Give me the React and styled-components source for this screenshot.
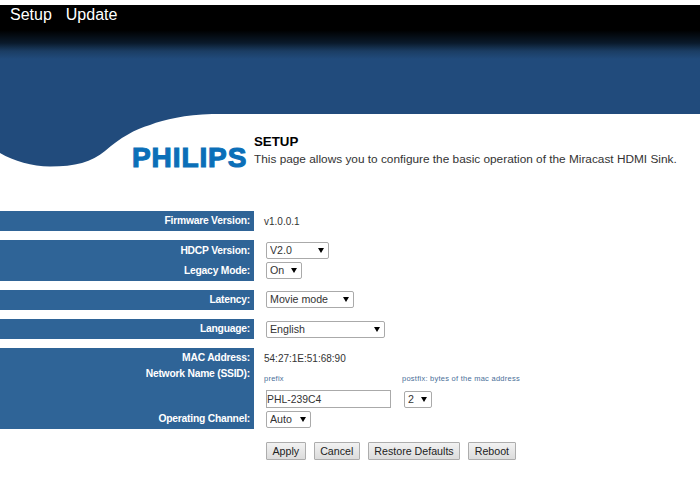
import React from 'react';
import styled, { createGlobalStyle } from 'styled-components';

const GlobalStyle = createGlobalStyle`
  html, body {
    margin: 0;
    padding: 0;
    background: #fff;
    font-family: "Liberation Sans", Arial, sans-serif;
  }
`;

const Dropdown = ({ width, value, options }) => (
  <SelectWrap $width={width}>
    <StSelect defaultValue={value}>
      {options.map((opt) => (
        <option key={opt}>{opt}</option>
      ))}
    </StSelect>
  </SelectWrap>
);

const App = () => {
  return (
    <Page>
      <GlobalStyle />
      <Banner>
        <NavLink>Setup</NavLink>
        <NavLink>Update</NavLink>
      </Banner>

      <Intro>
        <Wave viewBox="0 0 254 53" width="254" height="53">
          <path
            d="M0 0V39C14 47 32 52.5 50 52.5C75 52.5 92 48 105 37C120 24 135 15 150 11C165 5 185 1 212 0Z"
            fill="#214b7c"
          />
        </Wave>
        <Logo>PHILIPS</Logo>
        <IntroText>
          <Title>SETUP</Title>
          <Desc>This page allows you to configure the basic operation of the Miracast HDMI Sink.</Desc>
        </IntroText>
      </Intro>

      <Form>
        <Group>
          <Row $h={20}>
            <Label>Firmware Version:</Label>
            <Value>v1.0.0.1</Value>
          </Row>
        </Group>

        <Group>
          <Row $h={21}>
            <Label>HDCP Version:</Label>
            <Value $pad={2}>
              <Dropdown width={63} value="V2.0" options={['V2.0', 'V1.4']} />
            </Value>
          </Row>
          <Row $h={20}>
            <Label>Legacy Mode:</Label>
            <Value $pad={1}>
              <Dropdown width={36} value="On" options={['On', 'Off']} />
            </Value>
          </Row>
        </Group>

        <Group>
          <Row $h={20}>
            <Label>Latency:</Label>
            <Value $pad={1}>
              <Dropdown width={88} value="Movie mode" options={['Movie mode', 'Game mode']} />
            </Value>
          </Row>
        </Group>

        <Group>
          <Row $h={20}>
            <Label>Language:</Label>
            <Value $pad={2}>
              <Dropdown width={119} value="English" options={['English']} />
            </Value>
          </Row>
        </Group>

        <Group>
          <Row $h={20}>
            <Label>MAC Address:</Label>
            <Value>54:27:1E:51:68:90</Value>
          </Row>
          <SsidRow>
            <Label $top>Network Name (SSID):</Label>
            <SsidGrid>
              <Hint>prefix</Hint>
              <Hint>postfix: bytes of the mac address</Hint>
              <TextInput defaultValue="PHL-239C4" />
              <Dropdown width={28} value="2" options={['2', '3']} />
            </SsidGrid>
          </SsidRow>
          <Row $h={20}>
            <Label>Operating Channel:</Label>
            <Value $pad={2}>
              <Dropdown width={45} value="Auto" options={['Auto', '1', '6', '11']} />
            </Value>
          </Row>
        </Group>
      </Form>

      <Actions>
        <StButton>Apply</StButton>
        <StButton>Cancel</StButton>
        <StButton>Restore Defaults</StButton>
        <StButton>Reboot</StButton>
      </Actions>
    </Page>
  );
};

export default App;

const Page = styled.div`
  width: 700px;
  height: 502px;
  overflow: hidden;
  padding-top: 5px;
  box-sizing: border-box;
`;

const Banner = styled.div`
  height: 109px;
  display: flex;
  align-items: flex-start;
  gap: 14px;
  padding-left: 10px;
  box-sizing: border-box;
  background: linear-gradient(to bottom, #000 0, #000 25px, #0a1a2b 38px, #1b3d63 46px, #214b7c 54px, #214b7c 100%);
`;

const NavLink = styled.a`
  color: #fff;
  font-size: 16px;
  line-height: 20px;
  cursor: pointer;
`;

const Intro = styled.div`
  position: relative;
  height: 97px;
  display: flex;
  padding: 20px 0 0 132px;
  box-sizing: border-box;
`;

const Wave = styled.svg`
  position: absolute;
  left: 0;
  top: 0;
`;

const Logo = styled.div`
  position: relative;
  width: 122px;
  margin-top: 4px;
  color: #0b6fb8;
  font-size: 28px;
  line-height: 40px;
  font-weight: bold;
  letter-spacing: 0.9px;
  -webkit-text-stroke: 1.1px #0b6fb8;
`;

const IntroText = styled.div`
  display: flex;
  flex-direction: column;
`;

const Title = styled.div`
  color: #000;
  font-size: 13.3px;
  line-height: 16px;
  font-weight: bold;
`;

const Desc = styled.div`
  margin-top: 1px;
  color: #333;
  font-size: 11.83px;
  line-height: 16px;
  white-space: nowrap;
`;

const Form = styled.div`
  display: flex;
  flex-direction: column;
  gap: 9px;
`;

const Group = styled.div`
  display: flex;
  flex-direction: column;
`;

const Row = styled.div`
  display: grid;
  grid-template-columns: 254px 1fr;
  height: ${(props) => props.$h}px;
`;

const SsidRow = styled.div`
  display: grid;
  grid-template-columns: 254px 1fr;
  height: 41px;
`;

const Label = styled.div`
  background: #2f6497;
  color: #fff;
  font-size: 10.3px;
  letter-spacing: -0.22px;
  font-weight: bold;
  padding-right: 4px;
  display: flex;
  justify-content: flex-end;
  align-items: ${(props) => (props.$top ? 'flex-start' : 'center')};
  line-height: 12px;
`;

const Value = styled.div`
  display: flex;
  align-items: ${(props) => (props.$pad ? 'flex-start' : 'center')};
  padding: ${(props) => props.$pad || 0}px 0 0 10px;
  color: #333;
  font-size: 10px;
`;

const SsidGrid = styled.div`
  display: grid;
  grid-template-columns: 138px auto;
  grid-template-rows: 22px 18px;
  padding-left: 10px;
  align-items: center;
  justify-items: start;
`;

const Hint = styled.div`
  padding-bottom: 2px;
  color: #4a6f99;
  font-size: 7.5px;
  letter-spacing: 0.25px;
`;

const TextInput = styled.input`
  width: 125px;
  height: 18px;
  margin-left: 2px;
  box-sizing: border-box;
  border: 1px solid #aaa;
  padding: 0;
  font: 10.4px "Liberation Sans", Arial, sans-serif;
  color: #333;
  outline: none;
`;

const SelectWrap = styled.div`
  position: relative;
  width: ${(props) => props.$width}px;
  height: 17px;
  margin-left: 2px;

  &::after {
    content: '';
    position: absolute;
    right: 5px;
    top: 6px;
    border-left: 3px solid transparent;
    border-right: 3px solid transparent;
    border-top: 5px solid #000;
    pointer-events: none;
  }
`;

const StSelect = styled.select`
  appearance: none;
  display: block;
  width: 100%;
  height: 100%;
  box-sizing: border-box;
  background: #fff;
  border: 1px solid #aaa;
  border-radius: 2px;
  padding: 0 0 1px 3px;
  font: 10.67px "Liberation Sans", Arial, sans-serif;
  color: #333;
  outline: none;
`;

const Actions = styled.div`
  display: flex;
  gap: 8px;
  margin-top: 13px;
  padding-left: 266px;
`;

const StButton = styled.button`
  height: 18px;
  padding: 0 5.5px;
  box-sizing: border-box;
  background: linear-gradient(to bottom, #f2f2f2, #dcdcdc);
  border: 1px solid #adadad;
  border-radius: 1px;
  color: #222;
  font: 10.67px "Liberation Sans", Arial, sans-serif;
  cursor: pointer;
`;
